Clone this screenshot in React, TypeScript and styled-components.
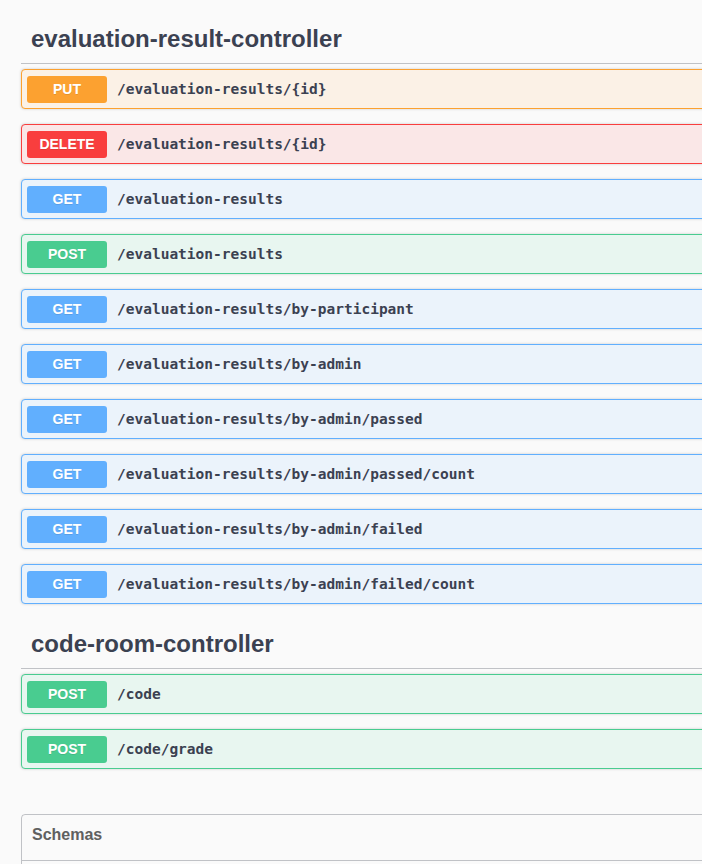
import styled, { createGlobalStyle } from "styled-components";

const GlobalStyle = createGlobalStyle`
  html, body {
    margin: 0;
    padding: 0;
    background: #fafafa;
    overflow: hidden;
  }
`;

type Method = "PUT" | "DELETE" | "GET" | "POST";

const COLORS: Record<Method, { main: string; bg: string }> = {
  PUT: { main: "#fca130", bg: "#fbf1e6" },
  DELETE: { main: "#f93e3e", bg: "#fae7e7" },
  GET: { main: "#61affe", bg: "#ebf3fb" },
  POST: { main: "#49cc90", bg: "#e8f6f0" },
};

const TAGS: { name: string; ops: [Method, string][] }[] = [
  {
    name: "evaluation-result-controller",
    ops: [
      ["PUT", "/evaluation-results/{id}"],
      ["DELETE", "/evaluation-results/{id}"],
      ["GET", "/evaluation-results"],
      ["POST", "/evaluation-results"],
      ["GET", "/evaluation-results/by-participant"],
      ["GET", "/evaluation-results/by-admin"],
      ["GET", "/evaluation-results/by-admin/passed"],
      ["GET", "/evaluation-results/by-admin/passed/count"],
      ["GET", "/evaluation-results/by-admin/failed"],
      ["GET", "/evaluation-results/by-admin/failed/count"],
    ],
  },
  {
    name: "code-room-controller",
    ops: [
      ["POST", "/code"],
      ["POST", "/code/grade"],
    ],
  },
];

const App = () => {
  return (
    <>
      <GlobalStyle />
      <Page>
        {TAGS.map((tag) => (
          <TagSection key={tag.name}>
            <TagTitle>{tag.name}</TagTitle>
            {tag.ops.map(([method, path], i) => (
              <OpBlock key={i} $method={method}>
                <MethodBadge $method={method}>{method}</MethodBadge>
                <OpPath>{path}</OpPath>
              </OpBlock>
            ))}
          </TagSection>
        ))}
        <Models>
          <ModelsTitle>Schemas</ModelsTitle>
        </Models>
      </Page>
    </>
  );
};

export default App;

const Page = styled.div`
  width: 1100px;
  padding: 14px 0 0 21px;
  font-family: "Liberation Sans", Arial, sans-serif;
`;

const TagSection = styled.div`
  display: flex;
  flex-direction: column;
`;

const TagTitle = styled.h3`
  margin: 0 0 5px;
  padding: 10px 20px 10px 10px;
  font-size: 24px;
  line-height: 29px;
  font-weight: 700;
  color: #3b4151;
  border-bottom: 1px solid rgba(59, 65, 81, 0.3);
`;

const OpBlock = styled.div<{ $method: Method }>`
  display: flex;
  align-items: center;
  gap: 10px;
  height: 40px;
  box-sizing: border-box;
  padding: 0 5px;
  margin-bottom: 15px;
  border: 1px solid ${(p) => COLORS[p.$method].main};
  background: ${(p) => COLORS[p.$method].bg};
  border-radius: 4px;
  box-shadow: 0 0 3px rgba(0, 0, 0, 0.19);
`;

const MethodBadge = styled.span<{ $method: Method }>`
  width: 80px;
  height: 27px;
  line-height: 27px;
  text-align: center;
  border-radius: 3px;
  background: ${(p) => COLORS[p.$method].main};
  color: #fff;
  font-size: 14px;
  font-weight: 700;
  text-shadow: 0 1px 0 rgba(0, 0, 0, 0.1);
`;

const OpPath = styled.span`
  font-family: "DejaVu Sans Mono", "Liberation Mono", monospace;
  font-size: 14.5px;
  font-weight: 700;
  color: #3b4151;
`;

const Models = styled.section`
  margin-top: 30px;
  border: 1px solid rgba(59, 65, 81, 0.3);
  border-radius: 4px;
  height: 60px;
`;

const ModelsTitle = styled.h4`
  margin: 0;
  padding: 0 10px;
  height: 45px;
  line-height: 40px;
  font-size: 16px;
  font-weight: 700;
  color: #606060;
  border-bottom: 1px solid rgba(59, 65, 81, 0.3);
`;
